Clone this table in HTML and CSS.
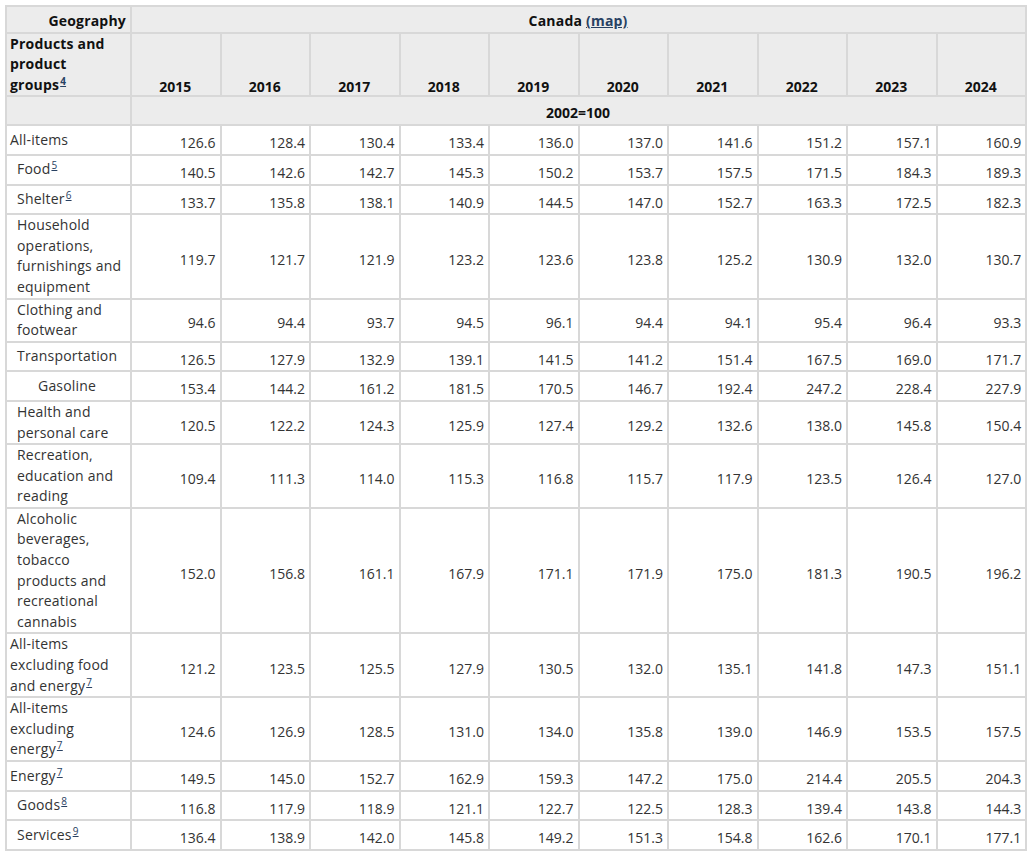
FILE: index.html
```html
<!DOCTYPE html>
<html lang="en">
<head>
<meta charset="utf-8">
<title>Consumer Price Index</title>
<link rel="stylesheet" href="styles.css">
</head>
<body>
<table class="cpi">
  <colgroup>
    <col class="c-label">
    <col class="c-year"><col class="c-year"><col class="c-year"><col class="c-year"><col class="c-year">
    <col class="c-year"><col class="c-year"><col class="c-year"><col class="c-year"><col class="c-year">
  </colgroup>
  <thead>
    <tr class="hr1">
      <th class="geo">Geography</th>
      <th class="canada" colspan="10">Canada <a href="#">(map)</a></th>
    </tr>
    <tr class="hr2">
      <th class="prod">Products and product groups<sup><a href="#">4</a></sup></th>
      <th class="yr">2015</th><th class="yr">2016</th><th class="yr">2017</th><th class="yr">2018</th><th class="yr">2019</th>
      <th class="yr">2020</th><th class="yr">2021</th><th class="yr">2022</th><th class="yr">2023</th><th class="yr">2024</th>
    </tr>
    <tr class="hr3">
      <th></th>
      <th class="unit" colspan="10">2002=100</th>
    </tr>
  </thead>
  <tbody>
    <tr><th class="lbl">All-items</th><td>126.6</td><td>128.4</td><td>130.4</td><td>133.4</td><td>136.0</td><td>137.0</td><td>141.6</td><td>151.2</td><td>157.1</td><td>160.9</td></tr>
    <tr><th class="lbl ind1">Food<sup><a href="#">5</a></sup></th><td>140.5</td><td>142.6</td><td>142.7</td><td>145.3</td><td>150.2</td><td>153.7</td><td>157.5</td><td>171.5</td><td>184.3</td><td>189.3</td></tr>
    <tr><th class="lbl ind1">Shelter<sup><a href="#">6</a></sup></th><td>133.7</td><td>135.8</td><td>138.1</td><td>140.9</td><td>144.5</td><td>147.0</td><td>152.7</td><td>163.3</td><td>172.5</td><td>182.3</td></tr>
    <tr><th class="lbl ind1">Household operations, furnishings and equipment</th><td>119.7</td><td>121.7</td><td>121.9</td><td>123.2</td><td>123.6</td><td>123.8</td><td>125.2</td><td>130.9</td><td>132.0</td><td>130.7</td></tr>
    <tr><th class="lbl ind1">Clothing and footwear</th><td>94.6</td><td>94.4</td><td>93.7</td><td>94.5</td><td>96.1</td><td>94.4</td><td>94.1</td><td>95.4</td><td>96.4</td><td>93.3</td></tr>
    <tr><th class="lbl ind1">Transportation</th><td>126.5</td><td>127.9</td><td>132.9</td><td>139.1</td><td>141.5</td><td>141.2</td><td>151.4</td><td>167.5</td><td>169.0</td><td>171.7</td></tr>
    <tr><th class="lbl ind2">Gasoline</th><td>153.4</td><td>144.2</td><td>161.2</td><td>181.5</td><td>170.5</td><td>146.7</td><td>192.4</td><td>247.2</td><td>228.4</td><td>227.9</td></tr>
    <tr><th class="lbl ind1">Health and personal care</th><td>120.5</td><td>122.2</td><td>124.3</td><td>125.9</td><td>127.4</td><td>129.2</td><td>132.6</td><td>138.0</td><td>145.8</td><td>150.4</td></tr>
    <tr><th class="lbl ind1">Recreation, education and reading</th><td>109.4</td><td>111.3</td><td>114.0</td><td>115.3</td><td>116.8</td><td>115.7</td><td>117.9</td><td>123.5</td><td>126.4</td><td>127.0</td></tr>
    <tr><th class="lbl ind1">Alcoholic beverages, tobacco products and recreational cannabis</th><td>152.0</td><td>156.8</td><td>161.1</td><td>167.9</td><td>171.1</td><td>171.9</td><td>175.0</td><td>181.3</td><td>190.5</td><td>196.2</td></tr>
    <tr><th class="lbl">All-items excluding food and energy<sup><a href="#">7</a></sup></th><td>121.2</td><td>123.5</td><td>125.5</td><td>127.9</td><td>130.5</td><td>132.0</td><td>135.1</td><td>141.8</td><td>147.3</td><td>151.1</td></tr>
    <tr><th class="lbl">All-items excluding energy<sup><a href="#">7</a></sup></th><td>124.6</td><td>126.9</td><td>128.5</td><td>131.0</td><td>134.0</td><td>135.8</td><td>139.0</td><td>146.9</td><td>153.5</td><td>157.5</td></tr>
    <tr><th class="lbl">Energy<sup><a href="#">7</a></sup></th><td>149.5</td><td>145.0</td><td>152.7</td><td>162.9</td><td>159.3</td><td>147.2</td><td>175.0</td><td>214.4</td><td>205.5</td><td>204.3</td></tr>
    <tr><th class="lbl ind1">Goods<sup><a href="#">8</a></sup></th><td>116.8</td><td>117.9</td><td>118.9</td><td>121.1</td><td>122.7</td><td>122.5</td><td>128.3</td><td>139.4</td><td>143.8</td><td>144.3</td></tr>
    <tr><th class="lbl ind1">Services<sup><a href="#">9</a></sup></th><td>136.4</td><td>138.9</td><td>142.0</td><td>145.8</td><td>149.2</td><td>151.3</td><td>154.8</td><td>162.6</td><td>170.1</td><td>177.1</td></tr>
  </tbody>
</table>
</body>
</html>
```

FILE: styles.css
```css
html, body {
  margin: 0;
  padding: 0;
  background: #ffffff;
}

body {
  padding: 5px;
  font-family: "Open Sans", "Noto Sans", sans-serif;
  font-size: 14px;
  line-height: 20.6px;
  letter-spacing: 0.2px;
  color: #333333;
}

.cpi {
  width: 1020px;
  table-layout: fixed;
  border-collapse: collapse;
}

.c-label { width: 125px; }
.c-year { width: 89.5px; }

.cpi th,
.cpi td {
  border: 2px solid #d8d8d8;
  padding: 0 4px 0 3px;
}

.cpi thead th {
  background: #ececec;
  font-weight: 700;
  color: #111111;
}

.hr1 th,
.hr2 th {
  border-bottom: 1px solid #000000;
}

.hr1 th {
  height: 20px;
  vertical-align: middle;
  padding-top: 4px;
}

.geo { text-align: right; }
.canada { text-align: center; }

.hr2 th {
  vertical-align: bottom;
  padding-bottom: 0;
}
.cpi .prod {
  text-align: left;
  vertical-align: top;
  padding: 0 14px 0 3px;
}
.yr {
  text-align: center;
  letter-spacing: 0;
  line-height: 16px;
}

.hr3 th {
  height: 23px;
  padding-top: 4px;
  text-align: center;
  vertical-align: middle;
  letter-spacing: 0;
}

.cpi a {
  color: #284162;
  text-decoration: underline;
}

sup {
  font-size: 10px;
  line-height: 0;
  vertical-align: 5px;
  margin-left: 1px;
}

.cpi tbody th.lbl {
  text-align: left;
  font-weight: 400;
  vertical-align: middle;
  padding-right: 3px;
  background: #ffffff;
}

.cpi tbody .ind1 { padding-left: 10px; }
.cpi tbody .ind2 { padding-left: 31px; }

.cpi tbody td {
  text-align: right;
  vertical-align: middle;
  padding: 7px 4px 0 4px;
  letter-spacing: 0;
}
```
